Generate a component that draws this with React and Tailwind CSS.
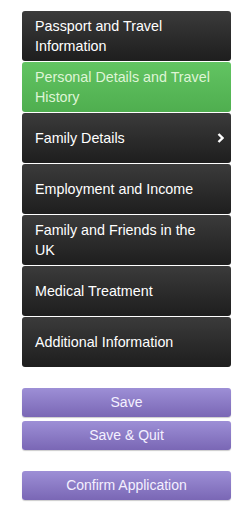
import React from 'react';

const items = [
    { lines: ['Passport and Travel', 'Information'] },
    { lines: ['Personal Details and Travel', 'History'], active: true },
    { lines: ['Family Details'], arrow: true },
    { lines: ['Employment and Income'] },
    { lines: ['Family and Friends in the', 'UK'] },
    { lines: ['Medical Treatment'] },
    { lines: ['Additional Information'] },
];

const btn = 'h-[29px] rounded-[3px] bg-gradient-to-b from-[#9d8fd6] to-[#7a67b5] text-[#f4f0ff] text-[14px] shadow-[0_1px_1px_rgba(0,0,0,0.2)]';

const App = () => {
    return (
        <div className="min-h-screen bg-white pt-[11px] pl-[22px] pr-[16px]" style={{ fontFamily: '"Liberation Sans", Arial, sans-serif' }}>
            {/* Side menu */}
            <div className="flex flex-col gap-px">
                {items.map((item) => (
                    <div
                        key={item.lines[0]}
                        className={`relative h-[50px] flex flex-col justify-center rounded-[3px] pl-[13px] pr-[8px] text-[14.3px] leading-[20px] whitespace-nowrap ${
                            item.active
                                ? 'bg-gradient-to-b from-[#62c462] to-[#4fae4f] text-[#dff5d6]'
                                : 'bg-gradient-to-b from-[#3b3b3b] to-[#1e1e1e] text-white'
                        }`}
                    >
                        {item.lines.map((line) => (
                            <span key={line}>{line}</span>
                        ))}
                        {item.arrow && (
                            <svg className="absolute right-[7px] top-[20px]" width="7" height="10" viewBox="0 0 7 10">
                                <path d="M1.5 1 L5.5 5 L1.5 9" stroke="white" strokeWidth="2.4" fill="none" />
                            </svg>
                        )}
                    </div>
                ))}
            </div>

            {/* Actions */}
            <div className="flex flex-col gap-[4px] mt-[21px]">
                <button className={btn}>Save</button>
                <button className={btn}>Save &amp; Quit</button>
            </div>
            <button className={`w-full mt-[21px] ${btn}`}>Confirm Application</button>
        </div>
    );
};

export default App;
